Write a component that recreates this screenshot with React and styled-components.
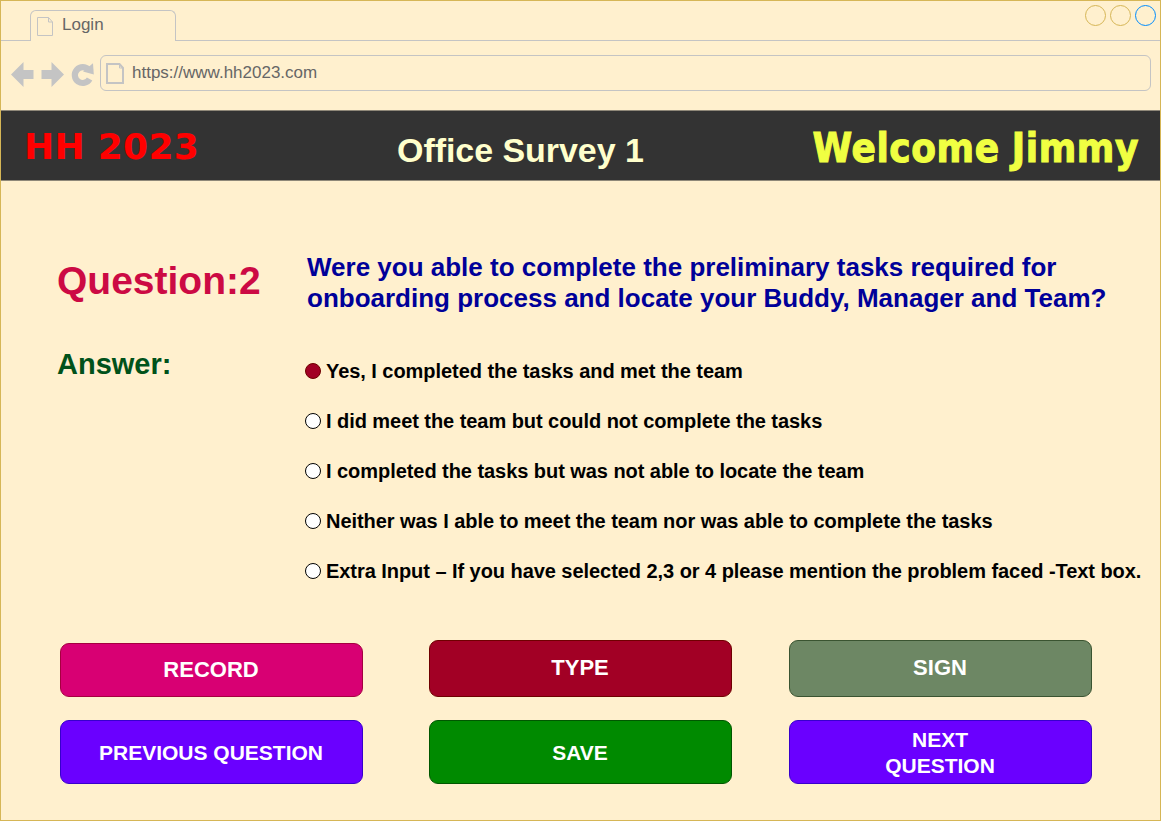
import React from "react";
import styled, { createGlobalStyle } from "styled-components";

const Global = createGlobalStyle`
  * { box-sizing: border-box; }
  body { margin: 0; background: #fff0ce; font-family: "Liberation Sans", Arial, sans-serif; }
`;

const line = "#c4c4c4";

const Frame = styled.div`
  width: 1161px;
  height: 821px;
  border: 1px solid #d6b656;
  background: #fff0ce;
  overflow: hidden;
  display: flex;
  flex-direction: column;
`;

const TabStrip = styled.div`
  height: 40px;
  display: flex;
  align-items: flex-end;
  flex: none;
`;

const StripLine = styled.div`
  width: ${(p) => p.$width || "auto"};
  flex: ${(p) => (p.$width ? "none" : 1)};
  align-self: stretch;
  border-bottom: 1px solid ${line};
  display: flex;
  justify-content: flex-end;
  gap: 4px;
  padding: 4px 4px 0 0;
`;

const Tab = styled.div`
  width: 146px;
  height: 31px;
  border: 1px solid ${line};
  border-bottom: none;
  border-radius: 6px 6px 0 0;
  display: flex;
  align-items: flex-start;
  gap: 9px;
  padding: 6px 0 0 6px;
  color: #666;
  font-size: 17px;
  line-height: 17px;
`;

const TabTitle = styled.span`
  margin-top: -1px;
`;

const WindowDot = styled.span`
  width: 21px;
  height: 21px;
  border-radius: 50%;
  border: 1px solid ${(p) => p.$color};
`;

const Toolbar = styled.div`
  height: 69px;
  flex: none;
  display: flex;
  align-items: flex-start;
  padding: 14px 9px 0 9px;
`;

const NavIcons = styled.svg`
  width: 90px;
  height: 36px;
  flex: none;
  display: block;
`;

const Address = styled.div`
  flex: 1;
  height: 36px;
  border: 1px solid ${line};
  border-radius: 6px;
  display: flex;
  align-items: flex-start;
  gap: 8px;
  padding: 7px 0 0 5px;
  color: #666;
  font-size: 17px;
  line-height: 20px;
`;

const Header = styled.header`
  height: 71px;
  flex: none;
  margin: 0 -1px;
  border: 1px solid rgba(51, 51, 51, 0.55);
  background: #333;
  background-clip: padding-box;
  display: flex;
  align-items: flex-start;
  white-space: nowrap;
  font-weight: bold;
`;

const Brand = styled.div`
  width: 372px;
  padding: 15px 0 0 23px;
  font: bold 36px/42px "DejaVu Sans", Verdana, sans-serif;
  letter-spacing: 0.3px;
  color: #ff0000;
`;

const SurveyTitle = styled.div`
  flex: 1;
  padding: 19px 0 0 24px;
  font-size: 34px;
  line-height: 40px;
  letter-spacing: -0.05px;
  color: #ffffcc;
`;

const Welcome = styled.div`
  padding: 14px 21px 0 0;
  font: bold 40px/47px "DejaVu Sans Condensed", "DejaVu Sans", Tahoma, sans-serif;
  font-stretch: condensed;
  letter-spacing: 0.6px;
  word-spacing: -1px;
  -webkit-text-stroke: 1px #f0ff42;
  color: #f0ff42;
`;

const Survey = styled.main`
  display: grid;
  grid-template-columns: 248px 1fr;
  padding: 71px 0 0 56px;
  font-weight: bold;
`;

const QuestionLabel = styled.h1`
  margin: 7px 0 0;
  font-size: 39px;
  line-height: 44px;
  color: #cc0a44;
`;

const QuestionText = styled.p`
  margin: 0 0 0 2px;
  font-size: 26px;
  line-height: 31px;
  white-space: nowrap;
  color: #000099;
`;

const AnswerLabel = styled.h2`
  margin: 33px 0 0;
  font-size: 29px;
  line-height: 34px;
  color: #00521a;
`;

const Options = styled.div`
  display: flex;
  flex-direction: column;
  padding-top: 32px;
`;

const Option = styled.div`
  height: 50px;
  display: flex;
  align-items: center;
  gap: 5px;
  font-size: 20px;
  letter-spacing: -0.052px;
  white-space: nowrap;
  color: #000;
`;

const Radio = styled.span`
  width: 16px;
  height: 16px;
  flex: none;
  border-radius: 50%;
  border: 1px solid ${(p) => (p.$on ? "#6f0000" : "#000")};
  background: ${(p) => (p.$on ? "#a20025" : "#fff")};
`;

const Actions = styled.div`
  display: grid;
  grid-template-columns: 303px 303px 303px;
  justify-content: start;
  column-gap: 66px;
  row-gap: 23px;
  align-items: end;
  padding: 44px 0 0 59px;
`;

const Button = styled.button`
  width: 303px;
  height: ${(p) => p.$height}px;
  margin: 0 0 0 ${(p) => p.$shift || 0}px;
  padding: ${(p) => p.$drop || 0}px 1px ${(p) => p.$lift || 0}px 0;
  border: 1px solid ${(p) => p.$edge};
  border-radius: 9px;
  background: ${(p) => p.$fill};
  color: #fff;
  font: bold ${(p) => p.$size || 22}px/26px "Liberation Sans", Arial, sans-serif;
  white-space: pre-line;
`;

const PageIcon = ({ w, h, stroke }) => (
  <svg width={w} height={h} viewBox={`0 0 ${w} ${h}`} fill="none" stroke={line} strokeWidth={stroke}>
    <path d={`M${stroke / 2} ${stroke / 2}H${w - 4.5}L${w - stroke / 2} 5V${h - stroke / 2}H${stroke / 2}Z`} />
    <path d={`M${w - 4.5} ${stroke / 2}V5H${w - stroke / 2}`} strokeWidth="1" />
  </svg>
);

const options = [
  "Yes, I completed the tasks and met the team",
  "I did meet the team but could not complete the tasks",
  "I completed the tasks but was not able to locate the team",
  "Neither was I able to meet the team nor was able to complete the tasks",
  "Extra Input – If you have selected 2,3 or 4 please mention the problem faced -Text box.",
];

const buttons = [
  { text: "RECORD", fill: "#d80073", edge: "#a50040", height: 54, lift: 1 },
  { text: "TYPE", fill: "#a20025", edge: "#6f0000", height: 57, lift: 2 },
  { text: "SIGN", fill: "#6d8764", edge: "#3a5431", height: 57, lift: 2, shift: -9 },
  { text: "PREVIOUS QUESTION", fill: "#6a00ff", edge: "#3700cc", height: 64, size: 21, drop: 2 },
  { text: "SAVE", fill: "#008a00", edge: "#005700", height: 64, size: 21, drop: 2 },
  { text: "NEXT\nQUESTION", fill: "#6a00ff", edge: "#3700cc", height: 64, size: 21, shift: -9, drop: 2 },
];

export default function App() {
  return (
    <>
      <Global />
      <Frame>
        <TabStrip>
          <StripLine $width="29px" />
          <Tab>
            <PageIcon w={16} h={19} stroke={1} />
            <TabTitle>Login</TabTitle>
          </Tab>
          <StripLine>
            <WindowDot $color="#d6b656" />
            <WindowDot $color="#d6b656" />
            <WindowDot $color="#008cff" />
          </StripLine>
        </TabStrip>
        <Toolbar>
          <NavIcons viewBox="10 55 90 36" fill={line}>
            <path d="M11 74.5 23.5 62V70H33.5V79H23.5V87Z" />
            <path d="M64 74.5 51.5 62V70H41.5V79H51.5V87Z" />
            <path d="M89.6 79A7.9 7.9 0 1 1 88.6 69.8" fill="none" stroke={line} strokeWidth="6.2" />
            <path d="M93 63.3 93.8 74.4 83 71.4Z" />
          </NavIcons>
          <Address>
            <PageIcon w={18} h={21} stroke={2} />
            <span>https://www.hh2023.com</span>
          </Address>
        </Toolbar>
        <Header>
          <Brand>HH 2023</Brand>
          <SurveyTitle>Office Survey 1</SurveyTitle>
          <Welcome>Welcome Jimmy</Welcome>
        </Header>
        <Survey>
          <QuestionLabel>Question:2</QuestionLabel>
          <QuestionText>
            Were you able to complete the preliminary tasks required for
            <br />
            onboarding process and locate your Buddy, Manager and Team?
          </QuestionText>
          <AnswerLabel>Answer:</AnswerLabel>
          <Options>
            {options.map((text, i) => (
              <Option key={text}>
                <Radio $on={i === 0} />
                <span>{text}</span>
              </Option>
            ))}
          </Options>
        </Survey>
        <Actions>
          {buttons.map((b) => (
            <Button
              key={b.text}
              $fill={b.fill}
              $edge={b.edge}
              $height={b.height}
              $lift={b.lift}
              $drop={b.drop}
              $shift={b.shift}
              $size={b.size}
            >
              {b.text}
            </Button>
          ))}
        </Actions>
      </Frame>
    </>
  );
}
